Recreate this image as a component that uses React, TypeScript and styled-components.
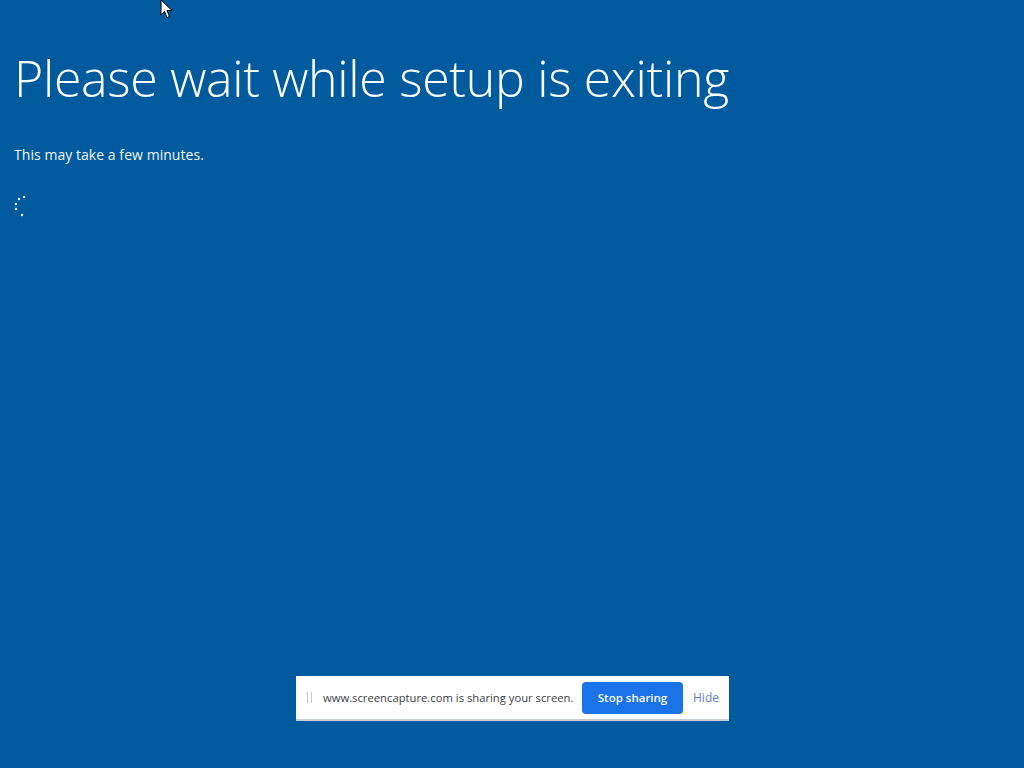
import React from "react";
import styled, { createGlobalStyle } from "styled-components";

const Global = createGlobalStyle`
  html, body { margin: 0; padding: 0; }
  body { background: #005a9e; }
`;

const Screen = styled.div`
  position: relative;
  width: 1024px;
  height: 768px;
  background: #005a9e;
  color: #ffffff;
  font-family: "Open Sans", "Noto Sans", sans-serif;
  display: flex;
  flex-direction: column;
  overflow: hidden;
`;

const Content = styled.div`
  display: flex;
  flex-direction: column;
  padding: 40px 0 0 14px;
  flex: 1;
`;

const Title = styled.h1`
  margin: 0;
  font-weight: 300;
  font-size: 50px;
  line-height: 76px;
  letter-spacing: -0.3px;
`;

const Subtitle = styled.p`
  margin: 29px 0 0 0;
  font-size: 14px;
  line-height: 20px;
  letter-spacing: 0.05px;
  color: #f2f6fa;
`;

const Spinner = styled.svg`
  margin-top: 30px;
  width: 14px;
  height: 24px;
`;

const BarRow = styled.div`
  display: flex;
  justify-content: flex-start;
  padding: 0 0 47px 296px;
`;

const Bar = styled.div`
  width: 433px;
  height: 45px;
  background: #ffffff;
  border-bottom: 2px solid #c4ccd6;
  display: flex;
  align-items: center;
  box-sizing: border-box;
  padding: 0 0 0 11px;
  font-family: "Open Sans", "Noto Sans", sans-serif;
`;

const Grip = styled.span`
  width: 5px;
  height: 11px;
  border-left: 1px solid #c8c8c8;
  border-right: 1px solid #c8c8c8;
  box-sizing: border-box;
  margin-right: 11px;
`;

const Message = styled.span`
  font-size: 11.25px;
  color: #3c4043;
  white-space: nowrap;
  width: 249px;
`;

const StopButton = styled.button`
  border: none;
  background: #1a73e8;
  color: #ffffff;
  font-family: "Open Sans", "Noto Sans", sans-serif;
  font-size: 11.5px;
  font-weight: 600;
  height: 32px;
  width: 101px;
  border-radius: 4px;
  padding: 0;
  margin-left: 10px;
`;

const HideLink = styled.span`
  font-size: 12px;
  color: #5f7fcc;
  margin-left: 10px;
`;

const Cursor = styled.svg`
  position: absolute;
  left: 160px;
  top: 0px;
  width: 14px;
  height: 20px;
`;

export default function App() {
  return (
    <Screen>
      <Global />
      <Content>
        <Title>Please wait while setup is exiting</Title>
        <Subtitle>This may take a few minutes.</Subtitle>
        <Spinner viewBox="0 0 14 24">
          <circle cx="10" cy="2" r="1.2" fill="#fff" />
          <circle cx="5" cy="4" r="1.2" fill="#fff" />
          <circle cx="2" cy="9" r="1.2" fill="#fff" />
          <circle cx="2" cy="14" r="1.2" fill="#fff" />
          <circle cx="8" cy="20" r="1.2" fill="#fff" />
        </Spinner>
      </Content>
      <BarRow>
        <Bar>
          <Grip />
          <Message>www.screencapture.com is sharing your screen.</Message>
          <StopButton>Stop sharing</StopButton>
          <HideLink>Hide</HideLink>
        </Bar>
      </BarRow>
      <Cursor viewBox="0 0 14 20">
        <path d="M1 0 L1 15 L4.5 11.5 L7 17.5 L9.5 16.5 L7 10.5 L12 10.5 Z" fill="#fff" stroke="#000" strokeWidth="1" />
      </Cursor>
    </Screen>
  );
}
